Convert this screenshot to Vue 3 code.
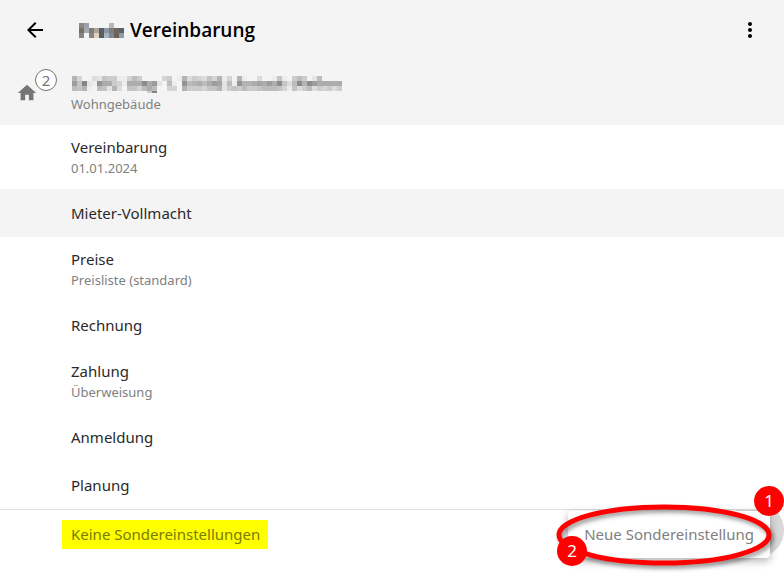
<script setup>
const entries = [
  { title: 'Vereinbarung', sub: '01.01.2024' },
  { title: 'Mieter-Vollmacht', active: true },
  { title: 'Preise', sub: 'Preisliste (standard)' },
  { title: 'Rechnung' },
  { title: 'Zahlung', sub: 'Überweisung' },
  { title: 'Anmeldung' },
  { title: 'Planung' }
]

// one hex digit per block, 0 is the background and f the darkest grey
const address = [
  '840032655114750000' + '450183543648140810' + '030016105750270000',
  'b6e21c99541999d9b2' + '0710c78979ba271c88' + '9a9b9d637d8db99999',
  '768107628306647970' + '044085554668256575' + '567776416357354535'
]

const name = [
  ['#8f8781', '#9aa3ad', '', '', '', '', '#b8b8bb', '', ''],
  ['#77706a', '#a3abb3', '#7f7d77', '#aaa59c', '#5c5c5c', '#8a98a8', '#807b78', '#6d6560', '#586370'],
  ['#858585', '', '#888480', '#e0d0c0', '#5c5c5c', '#a5b5c5', '#858585', '#6a615b', '#9099a8']
]

function grey(digit) {
  const v = 244 - parseInt(digit, 16) * 8
  return `rgb(${v}, ${v}, ${v})`
}
</script>

<template>
  <div class="page">
    <header class="bar">
      <button class="icon-btn" aria-label="Zurück">
        <svg width="24" height="24" viewBox="0 0 24 24">
          <path d="M20 11H7.83l5.59-5.59L12 4l-8 8 8 8 1.41-1.41L7.83 13H20v-2z" />
        </svg>
      </button>
      <h1>
        <svg class="name" width="45" height="15" shape-rendering="crispEdges">
          <template v-for="(row, y) in name" :key="y">
            <rect v-for="(c, x) in row" :key="x" :x="x * 5" :y="y * 5" width="5" height="5" :fill="c || 'none'" />
          </template>
        </svg>
        Vereinbarung
      </h1>
      <button class="icon-btn" aria-label="Mehr">
        <svg width="24" height="24" viewBox="0 0 24 24">
          <path d="M12 8c1.1 0 2-.9 2-2s-.9-2-2-2-2 .9-2 2 .9 2 2 2zm0 2c-1.1 0-2 .9-2 2s.9 2 2 2 2-.9 2-2-.9-2-2-2zm0 6c-1.1 0-2 .9-2 2s.9 2 2 2 2-.9 2-2-.9-2-2-2z" />
        </svg>
      </button>
    </header>

    <button class="entry two active building">
      <span class="house">
        <svg width="22" height="22" viewBox="0 0 24 24">
          <path d="M10 20v-6h4v6h5v-8h3L12 3 2 12h3v8z" />
        </svg>
        <span class="count">2</span>
      </span>
      <svg class="address" width="270" height="17" shape-rendering="crispEdges">
        <template v-for="(row, y) in address" :key="y">
          <rect v-for="(d, x) in row" :key="x" :x="x * 5" :y="y * 5" width="5" height="5" :fill="grey(d)" />
        </template>
        <rect x="75" y="15" width="5" height="2" :fill="grey('5')" />
        <rect x="80" y="15" width="5" height="2" :fill="grey('e')" />
      </svg>
      <span class="sub">Wohngebäude</span>
    </button>

    <button v-for="e in entries" :key="e.title" class="entry" :class="{ two: e.sub, active: e.active }">
      <span class="title">{{ e.title }}</span>
      <span v-if="e.sub" class="sub">{{ e.sub }}</span>
    </button>

    <footer class="footer">
      <span class="none">Keine Sondereinstellungen</span>
      <div class="clip"><div class="fab"></div></div>
      <button class="new">Neue Sondereinstellung</button>
      <svg class="marks" width="240" height="84" viewBox="0 0 240 84">
        <ellipse class="ring" cx="120" cy="45" rx="105" ry="28" />
        <circle cx="225" cy="11" r="15" />
        <text x="225" y="17">1</text>
        <circle cx="28" cy="61" r="15" />
        <text x="28" y="67">2</text>
      </svg>
    </footer>
  </div>
</template>

<style>
body {
  margin: 0;
  background: #fff;
}
</style>

<style scoped>
.page {
  position: relative;
  overflow: hidden;
  font-family: "Noto Sans", "Open Sans", sans-serif;
  color: #2a2a2a;
}
button {
  font-family: inherit;
  color: inherit;
  border: 0;
  padding: 0;
  background: none;
  cursor: pointer;
}
.bar {
  display: flex;
  align-items: center;
  height: 60px;
  padding: 0 22px 0 23px;
  background: #f4f4f4;
  color: #000;
}
.icon-btn {
  display: flex;
}
.icon-btn svg {
  fill: #000;
}
h1 {
  flex: 1;
  display: flex;
  align-items: center;
  gap: 6px;
  margin: 0 0 0 32px;
  font-family: "Open Sans", "Noto Sans", sans-serif;
  font-size: 19px;
  line-height: 28px;
  font-weight: 600;
}
.entry {
  position: relative;
  display: flex;
  flex-direction: column;
  justify-content: center;
  align-items: flex-start;
  width: 100%;
  height: 48px;
  padding-left: 71px;
  text-align: left;
}
.two {
  height: 64px;
}
.active {
  background: #f4f4f4;
}
.title {
  font-size: 15px;
  line-height: 22px;
}
.sub {
  font-size: 13px;
  line-height: 20px;
  color: #808080;
}
.building {
  height: 65px;
}
.address {
  margin: 4px 0 1px 1px;
}
.house {
  position: absolute;
  left: 16px;
  top: 22px;
}
.house svg {
  display: block;
  fill: #757575;
}
.count {
  position: absolute;
  left: 19px;
  top: -13px;
  box-sizing: border-box;
  width: 22px;
  height: 22px;
  border: 1px solid #757575;
  border-radius: 50%;
  background: #fff;
  color: #757575;
  font-size: 15px;
  line-height: 20px;
  text-align: center;
}
.footer {
  position: relative;
  display: flex;
  align-items: center;
  justify-content: space-between;
  box-sizing: border-box;
  height: 65px;
  padding: 0 14px 15px 62px;
  border-top: 1px solid #e0e0e0;
}
.none {
  padding: 0 8px 0 9px;
  background: #ff0;
  color: #7b7b00;
  font-size: 15px;
  line-height: 29px;
}
.clip {
  position: absolute;
  top: 0;
  right: 0;
  width: 56px;
  height: 64px;
  overflow: hidden;
}
.fab {
  width: 56px;
  height: 56px;
  margin-top: -8px;
  border-radius: 50%;
  background: #d8d8d8;
}
.new {
  position: relative;
  padding: 0 16px;
  border-radius: 4px;
  background: #fff;
  box-shadow: 0 3px 8px rgba(0, 0, 0, 0.3);
  color: #808080;
  font-size: 15px;
  line-height: 47px;
}
.marks {
  position: absolute;
  right: 0;
  top: -20px;
  overflow: visible;
  pointer-events: none;
}
.marks circle {
  fill: #f00;
}
.marks text {
  fill: #fff;
  font-size: 17px;
  text-anchor: middle;
}
.ring {
  fill: none;
  stroke: #f00;
  stroke-width: 5;
  filter: drop-shadow(2px 3px 2px rgba(0, 0, 0, 0.4));
}
</style>
